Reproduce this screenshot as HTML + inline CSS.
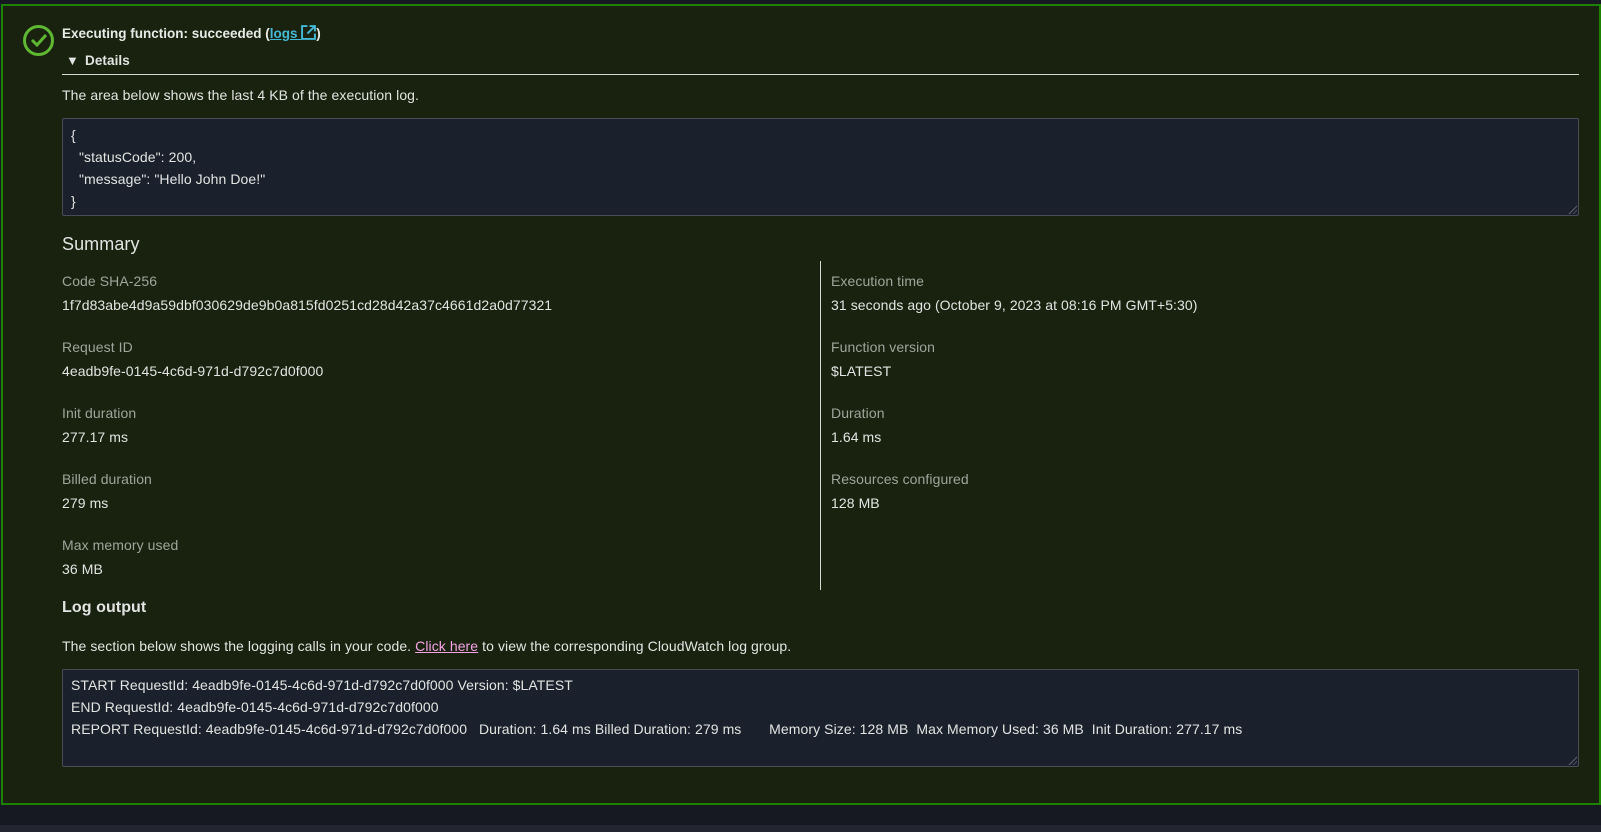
<!DOCTYPE html>
<html><head><meta charset="utf-8"><style>
*{margin:0;padding:0;box-sizing:border-box}
body{width:1601px;height:832px;background:#161922;font-family:"Liberation Sans",sans-serif;color:#e3e4e2;font-size:14px;letter-spacing:0.08px;position:relative;overflow:hidden}
.box{position:absolute;left:1px;top:4px;width:1600px;height:801px;background:#19220f;border:2px solid #1d8102}
.a{position:absolute;white-space:nowrap}
.ta{position:absolute;left:62px;width:1517px;background:#1b212c;border:1px solid #474c55;border-radius:2px}
.lbl{color:#9ea59c}
.grip{position:absolute;right:1px;bottom:1px;width:10px;height:10px;background:repeating-linear-gradient(135deg,transparent 0 2px,#5b616b 2px 3px);clip-path:polygon(100% 0,100% 100%,0 100%)}
</style></head><body>
<div class="box"></div>
<div style="position:absolute;left:23px;top:25px;width:31px;height:31px;border:3px solid #5fb832;border-radius:50%"></div>
<svg class="a" style="left:29px;top:32px" width="20" height="16" viewBox="0 0 20 16"><path d="M3 8l5 5 9-10" fill="none" stroke="#5fb832" stroke-width="3"/></svg>
<div class="a" style="left:62px;top:25px;font-weight:bold;font-size:13.5px;letter-spacing:0;color:#e8eae6">Executing function: succeeded (<span style="color:#44b9d6;text-decoration:underline">logs <svg width="15" height="15" viewBox="0 0 14 14" style="vertical-align:-2px"><path d="M6 1H1v12h12V8M8 1h5v5M13 1L6 8" fill="none" stroke="#44b9d6" stroke-width="1.8"/></svg></span>)</div>
<div class="a" style="left:66px;top:53px;font-size:13px">&#9660;</div>
<div class="a" style="left:85px;top:53px;font-weight:bold;font-size:13.5px">Details</div>
<div class="a" style="left:62px;top:74px;width:1517px;height:1px;background:#d5d8d2"></div>
<div class="a" style="left:62px;top:87px">The area below shows the last 4 KB of the execution log.</div>
<div class="ta" style="top:118px;height:98px"><div class="grip"></div></div>
<div class="a" style="left:71px;top:124px;line-height:22px">{<br>&nbsp;&nbsp;"statusCode": 200,<br>&nbsp;&nbsp;"message": "Hello John Doe!"<br>}</div>
<div class="a" style="left:62px;top:234px;font-size:18px">Summary</div>
<div class="a" style="left:820px;top:261px;width:1px;height:329px;background:#d5d8d2"></div>
<div class="a lbl" style="left:62px;top:273px">Code SHA-256</div>
<div class="a" style="left:62px;top:297px">1f7d83abe4d9a59dbf030629de9b0a815fd0251cd28d42a37c4661d2a0d77321</div>
<div class="a lbl" style="left:62px;top:339px">Request ID</div>
<div class="a" style="left:62px;top:363px">4eadb9fe-0145-4c6d-971d-d792c7d0f000</div>
<div class="a lbl" style="left:62px;top:405px">Init duration</div>
<div class="a" style="left:62px;top:429px">277.17 ms</div>
<div class="a lbl" style="left:62px;top:471px">Billed duration</div>
<div class="a" style="left:62px;top:495px">279 ms</div>
<div class="a lbl" style="left:62px;top:537px">Max memory used</div>
<div class="a" style="left:62px;top:561px">36 MB</div>
<div class="a lbl" style="left:831px;top:273px">Execution time</div>
<div class="a" style="left:831px;top:297px">31 seconds ago (October 9, 2023 at 08:16 PM GMT+5:30)</div>
<div class="a lbl" style="left:831px;top:339px">Function version</div>
<div class="a" style="left:831px;top:363px">$LATEST</div>
<div class="a lbl" style="left:831px;top:405px">Duration</div>
<div class="a" style="left:831px;top:429px">1.64 ms</div>
<div class="a lbl" style="left:831px;top:471px">Resources configured</div>
<div class="a" style="left:831px;top:495px">128 MB</div>
<div class="a" style="left:62px;top:599px;font-size:16px;font-weight:bold">Log output</div>
<div class="a" style="left:62px;top:638px">The section below shows the logging calls in your code. <span style="color:#f5a3e6;text-decoration:underline">Click here</span> to view the corresponding CloudWatch log group.</div>
<div class="ta" style="top:669px;height:98px"><div class="grip"></div></div>
<div class="a" style="left:71px;top:674px;line-height:22px">START RequestId: 4eadb9fe-0145-4c6d-971d-d792c7d0f000 Version: $LATEST<br>END RequestId: 4eadb9fe-0145-4c6d-971d-d792c7d0f000<br>REPORT RequestId: 4eadb9fe-0145-4c6d-971d-d792c7d0f000&nbsp;&nbsp; Duration: 1.64 ms Billed Duration: 279 ms&nbsp;&nbsp;&nbsp;&nbsp;&nbsp;&nbsp; Memory Size: 128 MB&nbsp; Max Memory Used: 36 MB&nbsp; Init Duration: 277.17 ms</div>
<div class="a" style="left:0;top:825px;width:1601px;height:7px;background:#232630"></div>
</body></html>
